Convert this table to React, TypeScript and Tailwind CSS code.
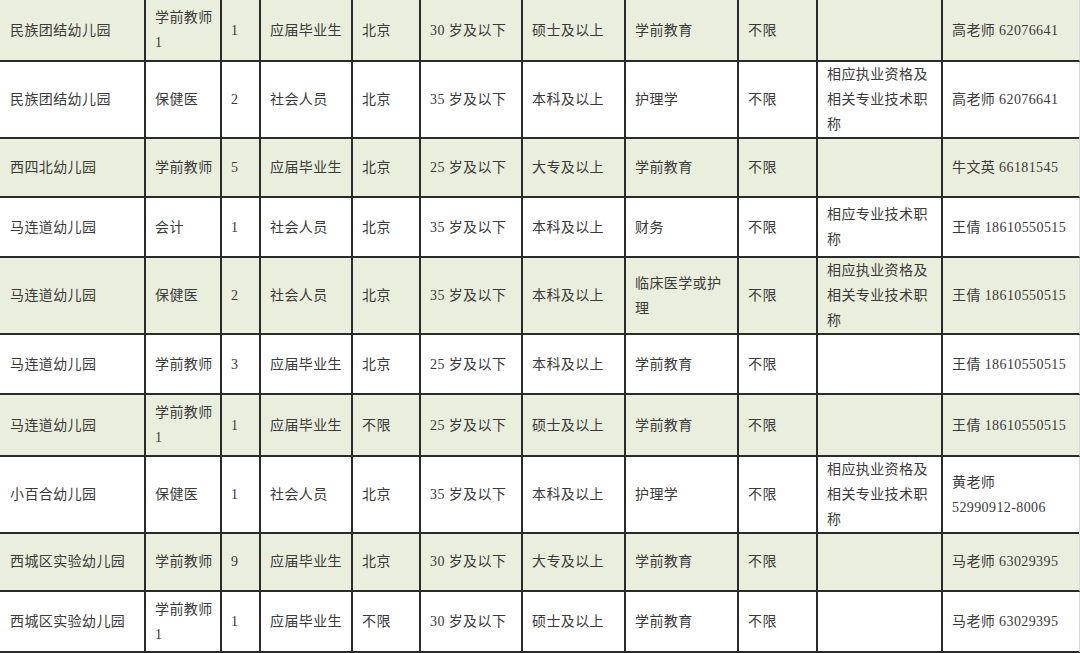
type Row = { h: string; bg: string; cells: string[][] };

const cols = 'grid grid-cols-[146px_76px_39px_92px_68px_102px_103px_113px_79px_125px_137px]';

const green = 'bg-[#eaeedd]';
const white = 'bg-white';

const rows: Row[] = [
  {
    h: 'h-[62px]',
    bg: green,
    cells: [['民族团结幼儿园'], ['学前教师', '1'], ['1'], ['应届毕业生'], ['北京'], ['30 岁及以下'], ['硕士及以上'], ['学前教育'], ['不限'], [], ['高老师 62076641']],
  },
  {
    h: 'h-[76px]',
    bg: white,
    cells: [['民族团结幼儿园'], ['保健医'], ['2'], ['社会人员'], ['北京'], ['35 岁及以下'], ['本科及以上'], ['护理学'], ['不限'], ['相应执业资格及', '相关专业技术职', '称'], ['高老师 62076641']],
  },
  {
    h: 'h-[60px]',
    bg: green,
    cells: [['西四北幼儿园'], ['学前教师'], ['5'], ['应届毕业生'], ['北京'], ['25 岁及以下'], ['大专及以上'], ['学前教育'], ['不限'], [], ['牛文英 66181545']],
  },
  {
    h: 'h-[60px]',
    bg: white,
    cells: [['马连道幼儿园'], ['会计'], ['1'], ['社会人员'], ['北京'], ['35 岁及以下'], ['本科及以上'], ['财务'], ['不限'], ['相应专业技术职', '称'], ['王倩 18610550515']],
  },
  {
    h: 'h-[77px]',
    bg: green,
    cells: [['马连道幼儿园'], ['保健医'], ['2'], ['社会人员'], ['北京'], ['35 岁及以下'], ['本科及以上'], ['临床医学或护', '理'], ['不限'], ['相应执业资格及', '相关专业技术职', '称'], ['王倩 18610550515']],
  },
  {
    h: 'h-[60px]',
    bg: white,
    cells: [['马连道幼儿园'], ['学前教师'], ['3'], ['应届毕业生'], ['北京'], ['25 岁及以下'], ['本科及以上'], ['学前教育'], ['不限'], [], ['王倩 18610550515']],
  },
  {
    h: 'h-[62px]',
    bg: green,
    cells: [['马连道幼儿园'], ['学前教师', '1'], ['1'], ['应届毕业生'], ['不限'], ['25 岁及以下'], ['硕士及以上'], ['学前教育'], ['不限'], [], ['王倩 18610550515']],
  },
  {
    h: 'h-[75px]',
    bg: white,
    cells: [['小百合幼儿园'], ['保健医'], ['1'], ['社会人员'], ['北京'], ['35 岁及以下'], ['本科及以上'], ['护理学'], ['不限'], ['相应执业资格及', '相关专业技术职', '称'], ['黄老师', '52990912-8006']],
  },
  {
    h: 'h-[60px]',
    bg: green,
    cells: [['西城区实验幼儿园'], ['学前教师'], ['9'], ['应届毕业生'], ['北京'], ['30 岁及以下'], ['大专及以上'], ['学前教育'], ['不限'], [], ['马老师 63029395']],
  },
  {
    h: 'h-[61px]',
    bg: white,
    cells: [['西城区实验幼儿园'], ['学前教师', '1'], ['1'], ['应届毕业生'], ['不限'], ['30 岁及以下'], ['硕士及以上'], ['学前教育'], ['不限'], [], ['马老师 63029395']],
  },
];

const App = () => {
  return (
    <div
      className="w-[1080px] h-[653px] overflow-hidden bg-white text-[14px] tracking-[0.4px] text-[#3a3a3a]"
      style={{ fontFamily: '"Liberation Serif", "Noto Sans CJK SC", serif' }}
    >
      {rows.map((row, i) => (
        <div key={i} className={`${cols} ${row.h} ${row.bg}`}>
          {row.cells.map((lines, j) => (
            <div
              key={j}
              className={`flex flex-col justify-center leading-[25px] border-b-2 border-[#2b2b2b] ${
                j === 0 ? 'pl-[10px]' : 'pl-[9px]'
              } ${j === 10 ? 'border-r border-r-[#d8d8d8]' : 'border-r-2'}`}
            >
              {lines.map((line, k) => (
                <span key={k} className="whitespace-nowrap">
                  {line}
                </span>
              ))}
            </div>
          ))}
        </div>
      ))}
    </div>
  );
};

export default App;
